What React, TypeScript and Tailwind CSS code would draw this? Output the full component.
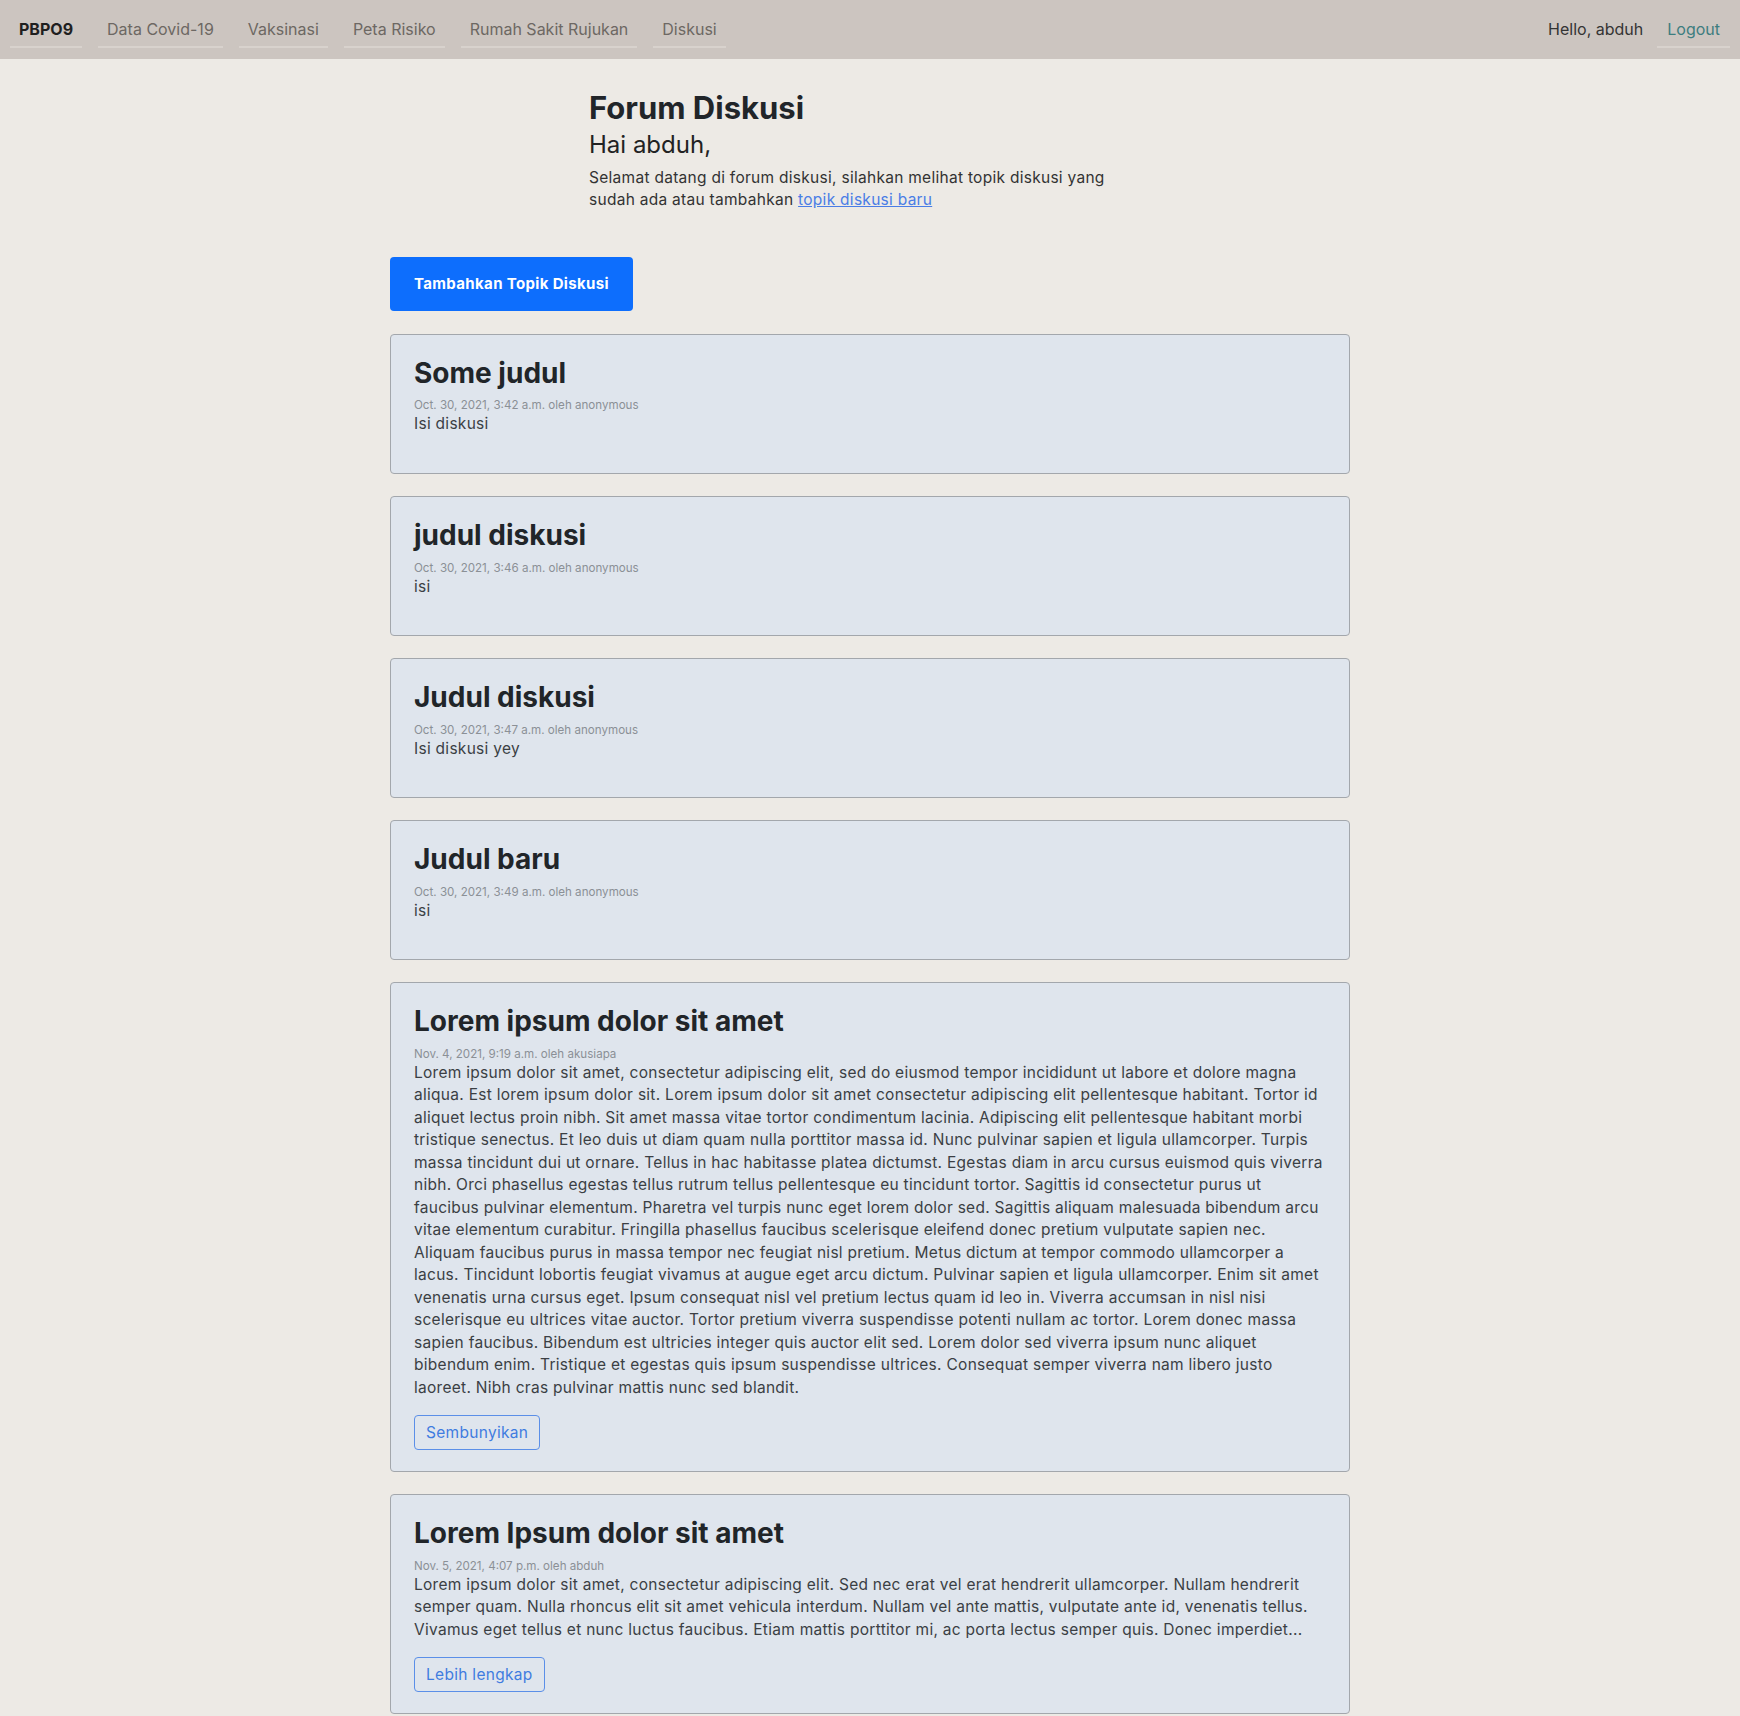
import React from 'react'

type Post = {
  title: string
  meta: string
  body: string
  button?: string
}

const posts: Post[] = [
  { title: 'Some judul', meta: 'Oct. 30, 2021, 3:42 a.m. oleh anonymous', body: 'Isi diskusi' },
  { title: 'judul diskusi', meta: 'Oct. 30, 2021, 3:46 a.m. oleh anonymous', body: 'isi' },
  { title: 'Judul diskusi', meta: 'Oct. 30, 2021, 3:47 a.m. oleh anonymous', body: 'Isi diskusi yey' },
  { title: 'Judul baru', meta: 'Oct. 30, 2021, 3:49 a.m. oleh anonymous', body: 'isi' },
  {
    title: 'Lorem ipsum dolor sit amet',
    meta: 'Nov. 4, 2021, 9:19 a.m. oleh akusiapa',
    body:
      'Lorem ipsum dolor sit amet, consectetur adipiscing elit, sed do eiusmod tempor incididunt ut labore et dolore magna aliqua. Est lorem ipsum dolor sit. Lorem ipsum dolor sit amet consectetur adipiscing elit pellentesque habitant. Tortor id aliquet lectus proin nibh. Sit amet massa vitae tortor condimentum lacinia. Adipiscing elit pellentesque habitant morbi tristique senectus. Et leo duis ut diam quam nulla porttitor massa id. Nunc pulvinar sapien et ligula ullamcorper. Turpis massa tincidunt dui ut ornare. Tellus in hac habitasse platea dictumst. Egestas diam in arcu cursus euismod quis viverra nibh. Orci phasellus egestas tellus rutrum tellus pellentesque eu tincidunt tortor. Sagittis id consectetur purus ut faucibus pulvinar elementum. Pharetra vel turpis nunc eget lorem dolor sed. Sagittis aliquam malesuada bibendum arcu vitae elementum curabitur. Fringilla phasellus faucibus scelerisque eleifend donec pretium vulputate sapien nec. Aliquam faucibus purus in massa tempor nec feugiat nisl pretium. Metus dictum at tempor commodo ullamcorper a lacus. Tincidunt lobortis feugiat vivamus at augue eget arcu dictum. Pulvinar sapien et ligula ullamcorper. Enim sit amet venenatis urna cursus eget. Ipsum consequat nisl vel pretium lectus quam id leo in. Viverra accumsan in nisl nisi scelerisque eu ultrices vitae auctor. Tortor pretium viverra suspendisse potenti nullam ac tortor. Lorem donec massa sapien faucibus. Bibendum est ultricies integer quis auctor elit sed. Lorem dolor sed viverra ipsum nunc aliquet bibendum enim. Tristique et egestas quis ipsum suspendisse ultrices. Consequat semper viverra nam libero justo laoreet. Nibh cras pulvinar mattis nunc sed blandit.',
    button: 'Sembunyikan',
  },
  {
    title: 'Lorem Ipsum dolor sit amet',
    meta: 'Nov. 5, 2021, 4:07 p.m. oleh abduh',
    body:
      'Lorem ipsum dolor sit amet, consectetur adipiscing elit. Sed nec erat vel erat hendrerit ullamcorper. Nullam hendrerit semper quam. Nulla rhoncus elit sit amet vehicula interdum. Nullam vel ante mattis, vulputate ante id, venenatis tellus. Vivamus eget tellus et nunc luctus faucibus. Etiam mattis porttitor mi, ac porta lectus semper quis. Donec imperdiet...',
    button: 'Lebih lengkap',
  },
]

const navLinks = ['Data Covid-19', 'Vaksinasi', 'Peta Risiko', 'Rumah Sakit Rujukan', 'Diskusi']

function PostCard({ post }: { post: Post }) {
  return (
    <div className="rounded-[4px] border border-[#a3a7ac] bg-[#dfe5ed] px-[23px] pt-[22px] pb-[21px]">
      <h3 className="text-[28px] font-bold leading-[1.2] text-[#212529]">{post.title}</h3>
      <div className="mt-[7px] text-[11.6px] leading-[16px] text-[#8b9096]">{post.meta}</div>
      <p className="mb-4 text-[15.5px] leading-[22.5px] tracking-[0.28px] text-[#3b3f44]">{post.body}</p>
      {post.button && (
        <button className="h-[35px] rounded-[4px] border border-[#5b8fe8] px-[11px] text-[15.5px] tracking-[0.3px] text-[#3f7ce0]">
          {post.button}
        </button>
      )}
    </div>
  )
}

export default function App() {
  return (
    <div className="min-h-screen bg-[#edeae5] font-['Inter',sans-serif] text-[#212529]">
      {/* navbar */}
      <nav className="flex h-[59px] items-start justify-between bg-[#ccc5c0] px-[10px]">
        <div className="flex gap-[16px]">
          <a className="border-b-2 border-[#d8d2cd] px-[9px] pt-[17px] pb-[5px] text-[16px] leading-6 font-bold text-[#1f1f1f]">
            PBPO9
          </a>
          {navLinks.map(l => (
            <a
              key={l}
              className="border-b-2 border-[#d8d2cd] px-[9px] pt-[17px] pb-[5px] text-[16px] leading-6 text-[#6d6863]"
            >
              {l}
            </a>
          ))}
        </div>
        <div className="flex items-start gap-[14px]">
          <span className="pt-[17px] text-[16px] leading-6 text-[#343434]">Hello, abduh</span>
          <a className="border-b-2 border-[#d8d2cd] px-[10px] pt-[17px] pb-[5px] text-[16px] leading-6 text-[#3d7d7f]">
            Logout
          </a>
        </div>
      </nav>

      <main className="mx-auto w-[960px] pb-10">
        {/* judul halaman */}
        <div className="mt-[32px] pl-[199px]">
          <h1 className="text-[31px] font-bold leading-[1.1]">Forum Diskusi</h1>
          <h2 className="mt-[6px] text-[24px] leading-[1.2] text-[#222]">Hai abduh,</h2>
          <p className="mt-[7px] w-[540px] text-[15.5px] leading-[22.5px] tracking-[0.28px] text-[#333]">
            Selamat datang di forum diskusi, silahkan melihat topik diskusi yang sudah ada atau tambahkan{' '}
            <a className="text-[#4a7de6] underline">topik diskusi baru</a>
          </p>
        </div>

        <button className="mt-[45px] h-[54px] rounded-[4px] bg-[#0d6efd] px-6 text-[15px] font-bold tracking-[0.35px] text-white">
          Tambahkan Topik Diskusi
        </button>

        <div className="mt-[23px] flex flex-col gap-[22px]">
          {posts.map((p, i) => (
            <PostCard key={i} post={p} />
          ))}
        </div>
      </main>
    </div>
  )
}
